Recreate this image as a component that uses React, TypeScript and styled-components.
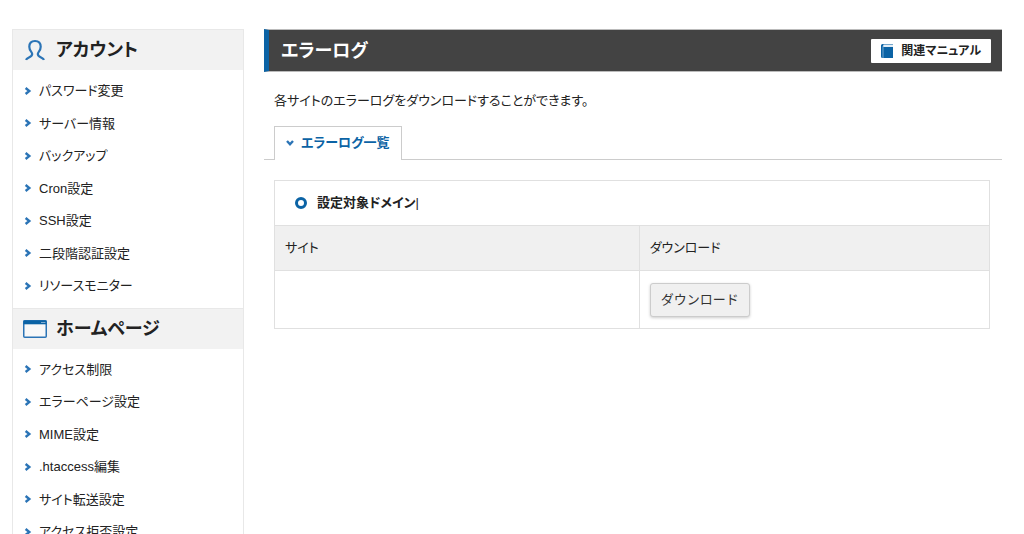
import React from "react";
import styled, { createGlobalStyle } from "styled-components";

const BLUE = "#0b63a5";

const GlobalStyle = createGlobalStyle`
  *, *::before, *::after { box-sizing: border-box; }
  body {
    margin: 0;
    background: #fff;
    color: #222;
    font-family: "Liberation Sans", "Noto Sans CJK JP", sans-serif;
    font-size: 13px;
    line-height: 1.5;
    font-feature-settings: "palt";
  }
  ul { list-style: none; margin: 0; padding: 0; }
  a { color: inherit; text-decoration: none; }
`;

const Page = styled.div`
  display: flex;
  align-items: flex-start;
  gap: 20px;
  padding: 29px 22px 0 12px;
`;

const Sidebar = styled.nav`
  flex: 0 0 232px;
  border: 1px solid #e8e8e8;
  border-width: 0 1px;
`;

const MenuHeading = styled.h2`
  display: flex;
  align-items: center;
  height: 41px;
  margin: 0;
  padding-left: 10px;
  gap: 9px;
  background: #f2f2f2;
  border-top: 1px solid #e8e8e8;
  font-size: 18px;
  line-height: 24px;
`;

const MenuList = styled.ul`
  && { padding: 5px 0; }
`;

const MenuLink = styled.a`
  display: flex;
  align-items: center;
  gap: 7px;
  padding: 6px 11px 7px;
`;

const Main = styled.main`
  flex: 1;
  min-width: 0;
`;

const TitleBar = styled.header`
  display: flex;
  align-items: center;
  justify-content: space-between;
  height: 43px;
  padding: 0 11px 0 12px;
  background: #434343;
  border: 1px solid #bbb;
  border-width: 1px 0;
  border-left: 5px solid ${BLUE};
`;

const Title = styled.h1`
  margin: 0;
  color: #fff;
  font-size: 18px;
  line-height: 24px;
`;

const ManualButton = styled.button`
  display: flex;
  align-items: center;
  gap: 8px;
  height: 24px;
  padding: 0 10px;
  border: 0;
  border-radius: 1px;
  background: #fff;
  color: #222;
  font: bold 12px/18px "Liberation Sans", "Noto Sans CJK JP", sans-serif;
  font-feature-settings: "palt";
`;

const Lead = styled.p`
  margin: 0;
  padding: 19px 10px 15px;
  line-height: 20px;
`;

const Tabs = styled.div`
  display: flex;
  padding: 0 10px;
  border-bottom: 1px solid #ccc;
`;

const Tab = styled.button`
  display: flex;
  align-items: center;
  gap: 7px;
  height: 34px;
  margin-bottom: -1px;
  padding: 0 11px 2px;
  border: 1px solid #ccc;
  border-bottom: 0;
  background: #fff;
  color: ${BLUE};
  font: bold 13px/20px "Liberation Sans", "Noto Sans CJK JP", sans-serif;
  font-feature-settings: "palt";
`;

const TableArea = styled.section`
  padding: 20px 12px 20px 10px;
`;

const Table = styled.table`
  width: 100%;
  border-collapse: collapse;
  table-layout: fixed;
`;

const Cell = styled.td`
  height: 58px;
  padding: 0 10px;
  border: 1px solid #e0e0e0;
  text-align: left;
`;

const HeadCell = styled(Cell).attrs({ as: "th" })`
  height: 45px;
  background: #f0f0f0;
  font-weight: normal;
`;

const DomainCell = styled(Cell).attrs({ as: "th" })`
  height: 45px;
  padding: 0 20px;
`;

const WideColumn = styled.col`
  width: 51%;
`;

const DomainLabel = styled.div`
  display: flex;
  align-items: center;
`;

const Ring = styled.span`
  width: 12px;
  height: 12px;
  margin-right: 10px;
  border: 3px solid ${BLUE};
  border-radius: 50%;
`;

const Divider = styled.span`
  font-weight: normal;
`;

const DownloadButton = styled.button`
  display: block;
  height: 34px;
  padding: 0 10px;
  border: 1px solid #ccc;
  border-radius: 3px;
  background: #f0f0f0;
  box-shadow: 0 1px 3px rgba(0, 0, 0, 0.2);
  color: #333;
  font: 13px/20px "Liberation Sans", "Noto Sans CJK JP", sans-serif;
`;

const Chevron = () => (
  <svg width="8" height="8" viewBox="0 0 8 8" fill="none" stroke="#2b74b6" strokeWidth="2.4" aria-hidden="true">
    <path d="M1.6 1l3.7 3-3.7 3" />
  </svg>
);

const ChevronDown = () => (
  <svg width="8" height="7" viewBox="0 0 8 7" fill="none" stroke="#2b74b6" strokeWidth="2.4" aria-hidden="true">
    <path d="M1 2l3 3.2L7 2" />
  </svg>
);

const UserIcon = () => (
  <svg width="24" height="22" viewBox="0 0 24 22" fill="none" stroke="#2b74b6" strokeWidth="2.2" aria-hidden="true">
    <path d="M3 20.8C4 18.2 9.2 18.6 9.2 15C9.2 12.8 6.3 12 6.3 7.8C6.3 4 8.6 2 12 2S17.7 4 17.7 7.8C17.7 12 14.8 12.8 14.8 15C14.8 18.6 20 18.2 21 20.8" />
  </svg>
);

const WindowIcon = () => (
  <svg width="24" height="18" viewBox="0 0 24 18" aria-hidden="true">
    <rect x="0.75" y="0.75" width="22.5" height="16.5" rx="1" fill="#f8f8f8" stroke="#2b74b6" strokeWidth="1.5" />
    <path d="M0.5 0.5h23V4.3H.5z" fill={BLUE} />
    <path d="M18 2.5h4.4" stroke="#7fadd3" />
  </svg>
);

const BookIcon = () => (
  <svg width="12" height="14" viewBox="0 0 12 14" aria-hidden="true">
    <path d="M1.5 0H12v.7H2.5V3H12v11H1.5A1.5 1.5 0 0 1 0 12.5v-11A1.5 1.5 0 0 1 1.5 0z" fill={BLUE} />
    <path d="M2 2v12" stroke="#8db9dd" strokeWidth="0.8" />
    <path d="M2.5.7H12V3H2.5z" fill="#e3eef7" />
  </svg>
);

const menus = [
  {
    title: "アカウント",
    icon: <UserIcon />,
    items: ["パスワード変更", "サーバー情報", "バックアップ", "Cron設定", "SSH設定", "二段階認証設定", "リソースモニター"],
  },
  {
    title: "ホームページ",
    icon: <WindowIcon />,
    items: ["アクセス制限", "エラーページ設定", "MIME設定", ".htaccess編集", "サイト転送設定", "アクセス拒否設定"],
  },
];

export default function App() {
  return (
    <>
      <GlobalStyle />
      <Page lang="ja">
        <Sidebar>
          {menus.map((menu) => (
            <section key={menu.title}>
              <MenuHeading>
                {menu.icon}
                {menu.title}
              </MenuHeading>
              <MenuList>
                {menu.items.map((item) => (
                  <li key={item}>
                    <MenuLink href="#">
                      <Chevron />
                      {item}
                    </MenuLink>
                  </li>
                ))}
              </MenuList>
            </section>
          ))}
        </Sidebar>
        <Main>
          <TitleBar>
            <Title>エラーログ</Title>
            <ManualButton type="button">
              <BookIcon />
              関連マニュアル
            </ManualButton>
          </TitleBar>
          <Lead>各サイトのエラーログをダウンロードすることができます。</Lead>
          <Tabs role="tablist">
            <Tab type="button" role="tab" aria-selected="true">
              <ChevronDown />
              エラーログ一覧
            </Tab>
          </Tabs>
          <TableArea>
            <Table>
              <colgroup>
                <WideColumn />
                <col />
              </colgroup>
              <thead>
                <tr>
                  <DomainCell colSpan={2}>
                    <DomainLabel>
                      <Ring />
                      設定対象ドメイン<Divider>|</Divider>
                    </DomainLabel>
                  </DomainCell>
                </tr>
                <tr>
                  <HeadCell>サイト</HeadCell>
                  <HeadCell>ダウンロード</HeadCell>
                </tr>
              </thead>
              <tbody>
                <tr>
                  <Cell />
                  <Cell>
                    <DownloadButton type="button">ダウンロード</DownloadButton>
                  </Cell>
                </tr>
              </tbody>
            </Table>
          </TableArea>
        </Main>
      </Page>
    </>
  );
}
